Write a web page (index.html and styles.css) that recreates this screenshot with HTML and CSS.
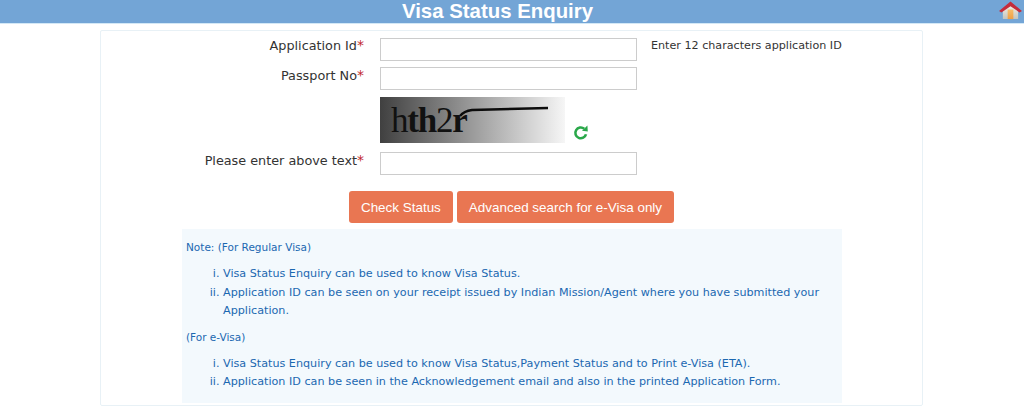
FILE: index.html
```html
<!DOCTYPE html>
<html lang="en">
<head>
<meta charset="utf-8">
<title>Visa Status Enquiry</title>
<link rel="stylesheet" href="styles.css">
</head>
<body>
<header class="topbar">
  <h1 class="title">Visa Status Enquiry</h1>
  <a class="home" href="#" aria-label="Home">
    <svg width="25" height="21" viewBox="0 0 26 22">
      <defs>
        <linearGradient id="wall" x1="0" y1="0" x2="0" y2="1"><stop offset="0" stop-color="#f7f3ea"/><stop offset="1" stop-color="#c4c4bc"/></linearGradient>
        <linearGradient id="door" x1="0" y1="0" x2="0" y2="1"><stop offset="0" stop-color="#f6bd6a"/><stop offset="1" stop-color="#ee9f45"/></linearGradient>
      </defs>
      <path d="M5 9 L13 4 L21 9 V20 H5 Z" fill="url(#wall)"/>
      <rect x="10" y="10" width="6" height="10" fill="url(#door)"/>
      <path d="M1 11.5 L13 1.5 L25 11.5 L22.5 13 L13 6.5 L3.5 13 Z" fill="#c42c3c"/>
    </svg>
  </a>
</header>
<main class="card">
  <form class="form">
    <label class="label label-first">Application Id<span class="req">*</span></label>
    <input class="field" type="text">
    <span class="hint">Enter 12 characters application ID</span>

    <label class="label">Passport No<span class="req">*</span></label>
    <input class="field" type="text">
    <span></span>

    <span></span>
    <div class="captcha-row">
      <svg class="captcha" width="185" height="46" viewBox="0 0 185 46">
        <defs>
          <linearGradient id="cap" x1="0" y1="0" x2="1" y2="0"><stop offset="0" stop-color="#404040"/><stop offset="1" stop-color="#f6f6f6"/></linearGradient>
        </defs>
        <rect width="185" height="46" fill="url(#cap)"/>
        <text class="captcha-text" x="11" y="35"><tspan class="thin">h</tspan>th<tspan class="thin">2</tspan>r</text>
        <path d="M80 19 Q84 14 92 13 L168 11" stroke="#0c0c0c" stroke-width="2.4" fill="none"/>
      </svg>
      <svg class="refresh" width="16" height="17" viewBox="0 0 16 17">
        <path d="M13 10.2 A5.4 5.4 0 1 1 11.2 4.7" fill="none" stroke="#2aa84a" stroke-width="2.6"/>
        <path d="M9 6.8 L14.8 7.6 L14.4 1.6 Z" fill="#2aa84a"/>
      </svg>
    </div>
    <span></span>

    <label class="label">Please enter above text<span class="req">*</span></label>
    <input class="field" type="text">
    <span></span>
  </form>
  <div class="actions">
    <button class="btn" type="button">Check Status</button>
    <button class="btn" type="button">Advanced search for e-Visa only</button>
  </div>
  <section class="note">
    <p class="note-head">Note: (For Regular Visa)</p>
    <ol class="note-list">
      <li>Visa Status Enquiry can be used to know Visa Status.</li>
      <li>Application ID can be seen on your receipt issued by Indian Mission/Agent where you have submitted your Application.</li>
    </ol>
    <p class="note-head note-head-2">(For e-Visa)</p>
    <ol class="note-list">
      <li>Visa Status Enquiry can be used to know Visa Status,Payment Status and to Print e-Visa (ETA).</li>
      <li>Application ID can be seen in the Acknowledgement email and also in the printed Application Form.</li>
    </ol>
  </section>
</main>
</body>
</html>
```
FILE: styles.css
```css
* { box-sizing: border-box; }
html, body { margin: 0; padding: 0; background: #fff; }
body { font-family: "DejaVu Sans", Verdana, sans-serif; color: #333; overflow: hidden; }

.topbar {
  display: flex;
  align-items: center;
  height: 24px;
  background: #73a5d6;
  border-bottom: 1px solid #d3e8f6;
}
.title {
  flex: 1;
  margin: 0;
  text-align: center;
  font: bold 20.4px/23px "Liberation Sans", Arial, sans-serif;
  color: #fff;
}
.home { display: flex; justify-content: flex-end; width: 29px; height: 23px; padding-right: 1px; }

.card {
  width: 823px;
  height: 376px;
  margin: 6px 0 0 100px;
  padding-top: 7px;
  border: 1px solid #e8f1f6;
  border-radius: 2px;
}
.form {
  display: grid;
  grid-template-columns: 263px 257px 1fr;
  column-gap: 16px;
  row-gap: 6px;
  align-items: center;
}
.label { text-align: right; font-size: 12.8px; line-height: 16px; position: relative; top: -3px; }
.label-first { top: -4px; }
.req { color: #c1272d; font-size: 14px; }
.field {
  width: 257px;
  height: 23px;
  padding: 0 6px;
  border: 1px solid #ccc;
  background: #fff;
}
.hint { margin-left: -2px; font-size: 11.15px; position: relative; top: -4px; }

.captcha-row { display: flex; align-items: flex-end; gap: 9px; margin-top: 1px; margin-bottom: 3px; }
.captcha { display: block; }
.captcha-text { font: bold 35px "Liberation Serif", serif; fill: #111; letter-spacing: -1.2px; }
.captcha-text .thin { font-weight: normal; }
.refresh { margin-bottom: 2px; margin-left: -1px; }

.actions { display: flex; justify-content: center; gap: 4px; margin-top: 16px; }
.btn {
  height: 32px;
  padding: 0 12px;
  border: 0;
  border-radius: 3px;
  background: #e97652;
  color: #fff;
  font: 13.45px "Liberation Sans", Arial, sans-serif;
}

.note {
  width: 660px;
  height: 174px;
  margin: 6px 0 0 81px;
  padding: 12px 4px 0;
  background: #f3f9fd;
  color: #1b68b1;
  font-size: 11.18px;
  line-height: 18.6px;
}
.note-head { margin: 0; font-size: 10.5px; line-height: 13px; }
.note-head-2 { margin-top: 10px; }
.note-list { margin: 11px 0 0; padding: 0 0 0 37px; list-style-type: lower-roman; }
```
